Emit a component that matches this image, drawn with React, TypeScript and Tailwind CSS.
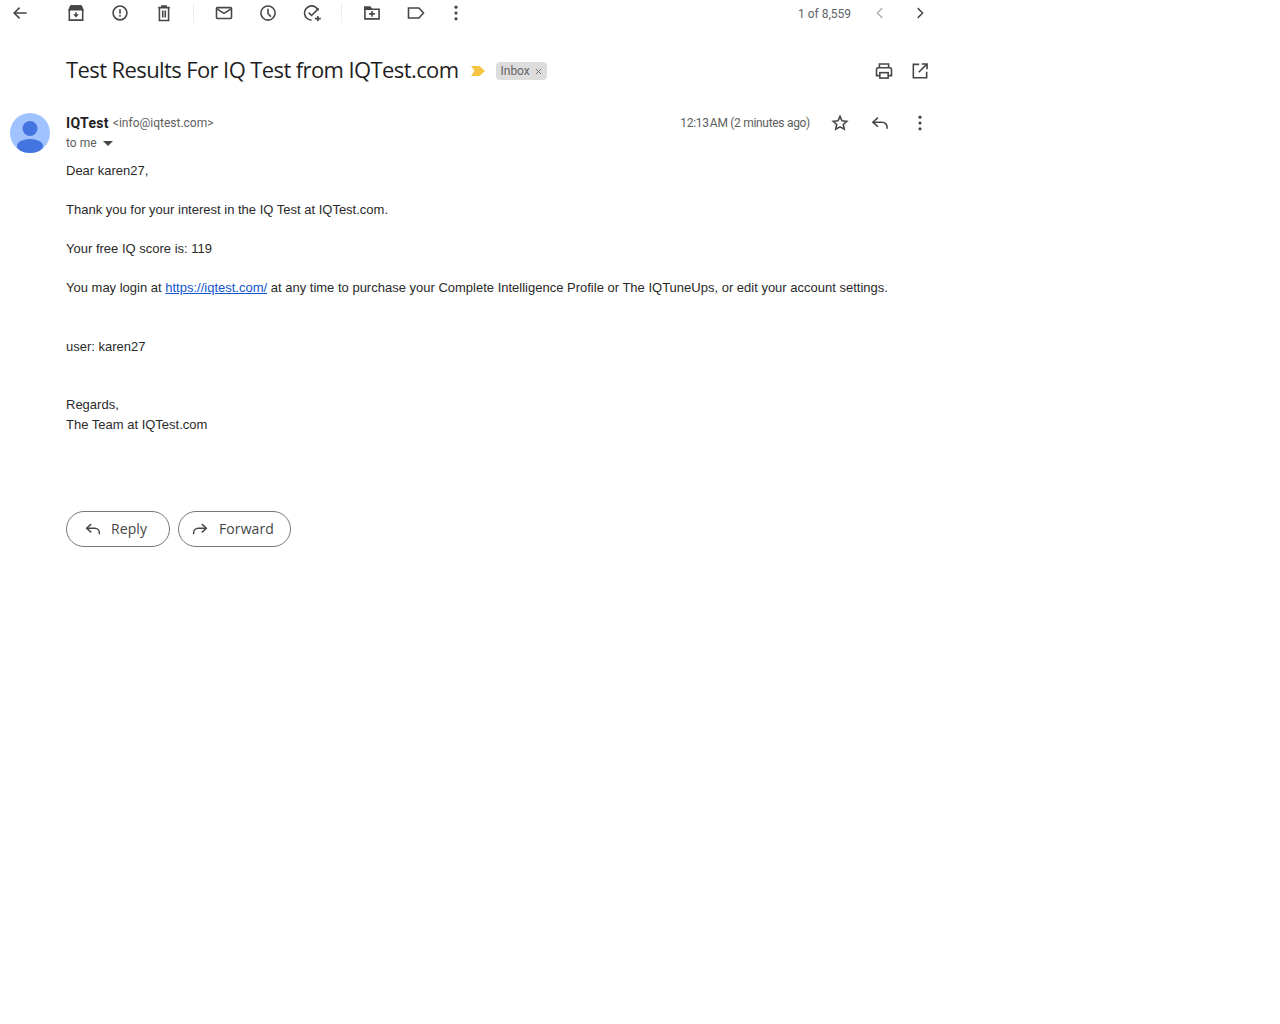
import type { ReactNode } from "react";

function Icon({ size = 20, className = "", children }: { size?: number; className?: string; children: ReactNode }) {
  return (
    <svg width={size} height={size} viewBox="0 0 24 24" fill="none" stroke="#444746" strokeWidth="1.9" className={`shrink-0 ${className}`}>
      {children}
    </svg>
  );
}

const Dots = () => (
  <svg width="20" height="20" viewBox="0 0 24 24" fill="#444746" className="shrink-0">
    <circle cx="12" cy="5" r="1.900" />
    <circle cx="12" cy="12" r="1.900" />
    <circle cx="12" cy="19" r="1.900" />
  </svg>
);

const ReplyArrow = () => (
  <Icon size={18}>
    <path d="M9.500 5.500 3.500 11l6 5.500" />
    <path d="M4 11h10.500a6 6 0 0 1 6 6v2" />
  </Icon>
);

const ForwardArrow = () => (
  <Icon size={18}>
    <path d="M14.500 5.500l6 5.500-6 5.500" />
    <path d="M20 11H9.500a6 6 0 0 0-6 6v2" />
  </Icon>
);

function Toolbar() {
  return (
    <div className="flex h-[26px] w-[940px] items-center pl-[10px]">
      <Icon><path d="M20 12H5M11.500 5.500 5 12l6.500 6.500" /></Icon>
      <div className="ml-[36px] flex gap-[24px]">
        <Icon>
          <path d="M4 8 6 3.500h12L20 8v12.500H4z" />
          <path d="M4 8l2-4.500h12L20 8z" fill="#444746" />
          <path d="M12 11v4.500" />
          <path d="M8.500 13.500h7L12 17.500z" fill="#444746" stroke="none" />
        </Icon>
        <Icon>
          <circle cx="12" cy="12" r="8.300" />
          <path d="M12 7.500v5.500M12 14.500v2" />
        </Icon>
        <Icon>
          <path d="M5 5.500h14M9.500 5.500V3.500h5v2M6.500 5.500V21h11V5.500" />
          <path d="M10.500 9v8.500M13.500 9v8.500" />
        </Icon>
      </div>
      <div className="ml-[19px] h-[20px] w-px bg-[#eeeeee]" />
      <div className="ml-[20px] flex gap-[24px]">
        <Icon>
          <rect x="3" y="5.500" width="18" height="13" rx="1.200" />
          <path d="M3.500 7l8.500 5.500L20.500 7" />
        </Icon>
        <Icon>
          <circle cx="12" cy="12" r="8.500" />
          <path d="M12 7v5.500l3.500 4" />
        </Icon>
        <Icon>
          <path d="M19.500 9A8.500 8.500 0 1 0 11.500 20.500" />
          <path d="M8 11.500l3.500 3.500L20 6.500" />
          <path d="M19 15.500v6.500M15.500 18.800h7" />
        </Icon>
      </div>
      <div className="ml-[19px] h-[20px] w-px bg-[#eeeeee]" />
      <div className="ml-[20px] flex gap-[24px]">
        <Icon>
          <path d="M3.500 5h6l2 2.500h9v11.500h-17z" />
          <path d="M3.500 5h6l2 2.500h-8z" fill="#444746" />
          <path d="M8.500 13h7M12 9.500v7" />
        </Icon>
        <Icon>
          <path d="M3 6h12.500l5.500 6-5.500 6H3z" />
        </Icon>
      </div>
      <div className="ml-[20px]"><Dots /></div>
      <div className="ml-auto flex items-center pr-[11px]">
        <span className="mr-[20px] mt-[2px] text-[12px] text-[#5f6368] font-['Roboto',sans-serif]">1 of 8,559</span>
        <Icon size={18}><path d="M15 5.500 8.500 12l6.500 6.500" stroke="#b0b3b6" /></Icon>
        <Icon size={18} className="ml-[22px]"><path d="M9 5.500l6.500 6.500L9 18.500" /></Icon>
      </div>
    </div>
  );
}

function Subject() {
  return (
    <div className="mt-[27px] flex h-[36px] w-[940px] items-center pl-[66px]">
      <h1 className="mt-[-3px] whitespace-nowrap text-[22px] tracking-[-0.6px] text-[#1f1f1f] font-['Open_Sans',sans-serif]">
        Test Results For IQ Test from IQTest.com
      </h1>
      <svg width="14" height="10" viewBox="0 0 14 10" className="ml-[13px] shrink-0">
        <path d="M0 0h8.500L14 5l-5.500 5H0l3.500-5z" fill="#f6c544" />
      </svg>
      <span className="ml-[11px] flex h-[18px] w-[51px] items-center rounded-[4px] bg-[#dddddd] pl-[4px] text-[12px] text-[#666666] font-['Roboto',sans-serif]">
        Inbox
        <svg width="7" height="7" viewBox="0 0 8 8" stroke="#666" strokeWidth="1" className="ml-[5px]">
          <path d="M1 1l6 6M7 1 1 7" />
        </svg>
      </span>
      <div className="ml-auto flex gap-[16px] pr-[10px]">
        <Icon>
          <path d="M6.500 8V3.500h11V8" />
          <path d="M6.500 17.500h-3.500V10a2 2 0 0 1 2-2h14a2 2 0 0 1 2 2v7.500h-3.500" />
          <rect x="7" y="14" width="10" height="6.500" />
        </Icon>
        <Icon>
          <path d="M11 4H4v16h16v-7" />
          <path d="M14 3.500h6.500V10M20.500 3.500 10.500 13.500" />
        </Icon>
      </div>
    </div>
  );
}

function Header() {
  return (
    <div className="mt-[24px] flex w-[940px] px-[10px]">
      <svg width="40" height="40" viewBox="0 0 40 40" className="shrink-0">
        <circle cx="20" cy="20" r="20" fill="#a0c3ff" />
        <circle cx="20" cy="15.500" r="7.500" fill="#4374e0" />
        <ellipse cx="20" cy="33" rx="13" ry="7" fill="#4374e0" />
      </svg>
      <div className="ml-[16px] flex-1 font-['Roboto',sans-serif]">
        <div className="flex h-[20px] items-center whitespace-nowrap">
          <span className="text-[14px] font-bold tracking-[0.3px] text-[#1f1f1f]">IQTest</span>
          <span className="ml-[4px] text-[12px] text-[#5e5e5e]">&lt;info@iqtest.com&gt;</span>
        </div>
        <div className="flex h-[20px] items-center text-[12px] text-[#5e5e5e]">
          to me
          <svg width="10" height="5" viewBox="0 0 10 5" className="ml-[6px]"><path d="M0 0h10L5 5z" fill="#444746" /></svg>
        </div>
      </div>
      <div className="flex h-[20px] items-center">
        <span className="mr-[20px] whitespace-nowrap text-[12px] tracking-[-0.3px] text-[#5e5e5e] font-['Roboto',sans-serif]">12:13{"\u202f"}AM (2 minutes ago)</span>
        <Icon><path d="M12 4l2.400 5.300 5.800.6-4.300 3.900 1.200 5.700L12 16.600l-5.100 2.900 1.200-5.700-4.300-3.900 5.800-.6z" /></Icon>
        <div className="ml-[20px]"><Icon><path d="M9.500 5.500 3.500 11l6 5.500" /><path d="M4 11h10.500a6 6 0 0 1 6 6v2" /></Icon></div>
        <div className="ml-[20px]"><Dots /></div>
      </div>
    </div>
  );
}

function Body() {
  return (
    <div className="mt-[8px] w-[940px] pl-[66px] text-[13px] leading-[19.5px] text-[#2a2a2a] font-['Liberation_Sans',sans-serif]">
      <p>Dear karen27,</p>
      <p className="mt-[19.5px]">Thank you for your interest in the IQ Test at IQTest.com.</p>
      <p className="mt-[19.5px]">Your free IQ score is: 119</p>
      <p className="mt-[19.5px]">
        You may login at <span className="text-[#1155cc] underline">https://iqtest.com/</span> at any time to purchase your Complete Intelligence Profile or The IQTuneUps, or edit your account settings.
      </p>
      <p className="mt-[39px]">user: karen27</p>
      <p className="mt-[39px]">Regards,</p>
      <p>The Team at IQTest.com</p>
    </div>
  );
}

function Actions() {
  return (
    <div className="ml-[66px] mt-[77px] flex gap-[8px] text-[14px] font-medium text-[#444746] font-['Open_Sans',sans-serif]">
      <button className="flex h-[36px] w-[104px] items-center rounded-[18px] border border-[#747775] pl-[17px]">
        <ReplyArrow />
        <span className="mb-[2px] ml-[9px] tracking-[0.1px]">Reply</span>
      </button>
      <button className="flex h-[36px] w-[113px] items-center rounded-[18px] border border-[#747775] pl-[12px]">
        <ForwardArrow />
        <span className="mb-[2px] ml-[10px] tracking-[0.1px]">Forward</span>
      </button>
    </div>
  );
}

export default function App() {
  return (
    <div className="h-[1024px] w-[1280px] overflow-hidden bg-white">
      <Toolbar />
      <Subject />
      <Header />
      <Body />
      <Actions />
    </div>
  );
}
